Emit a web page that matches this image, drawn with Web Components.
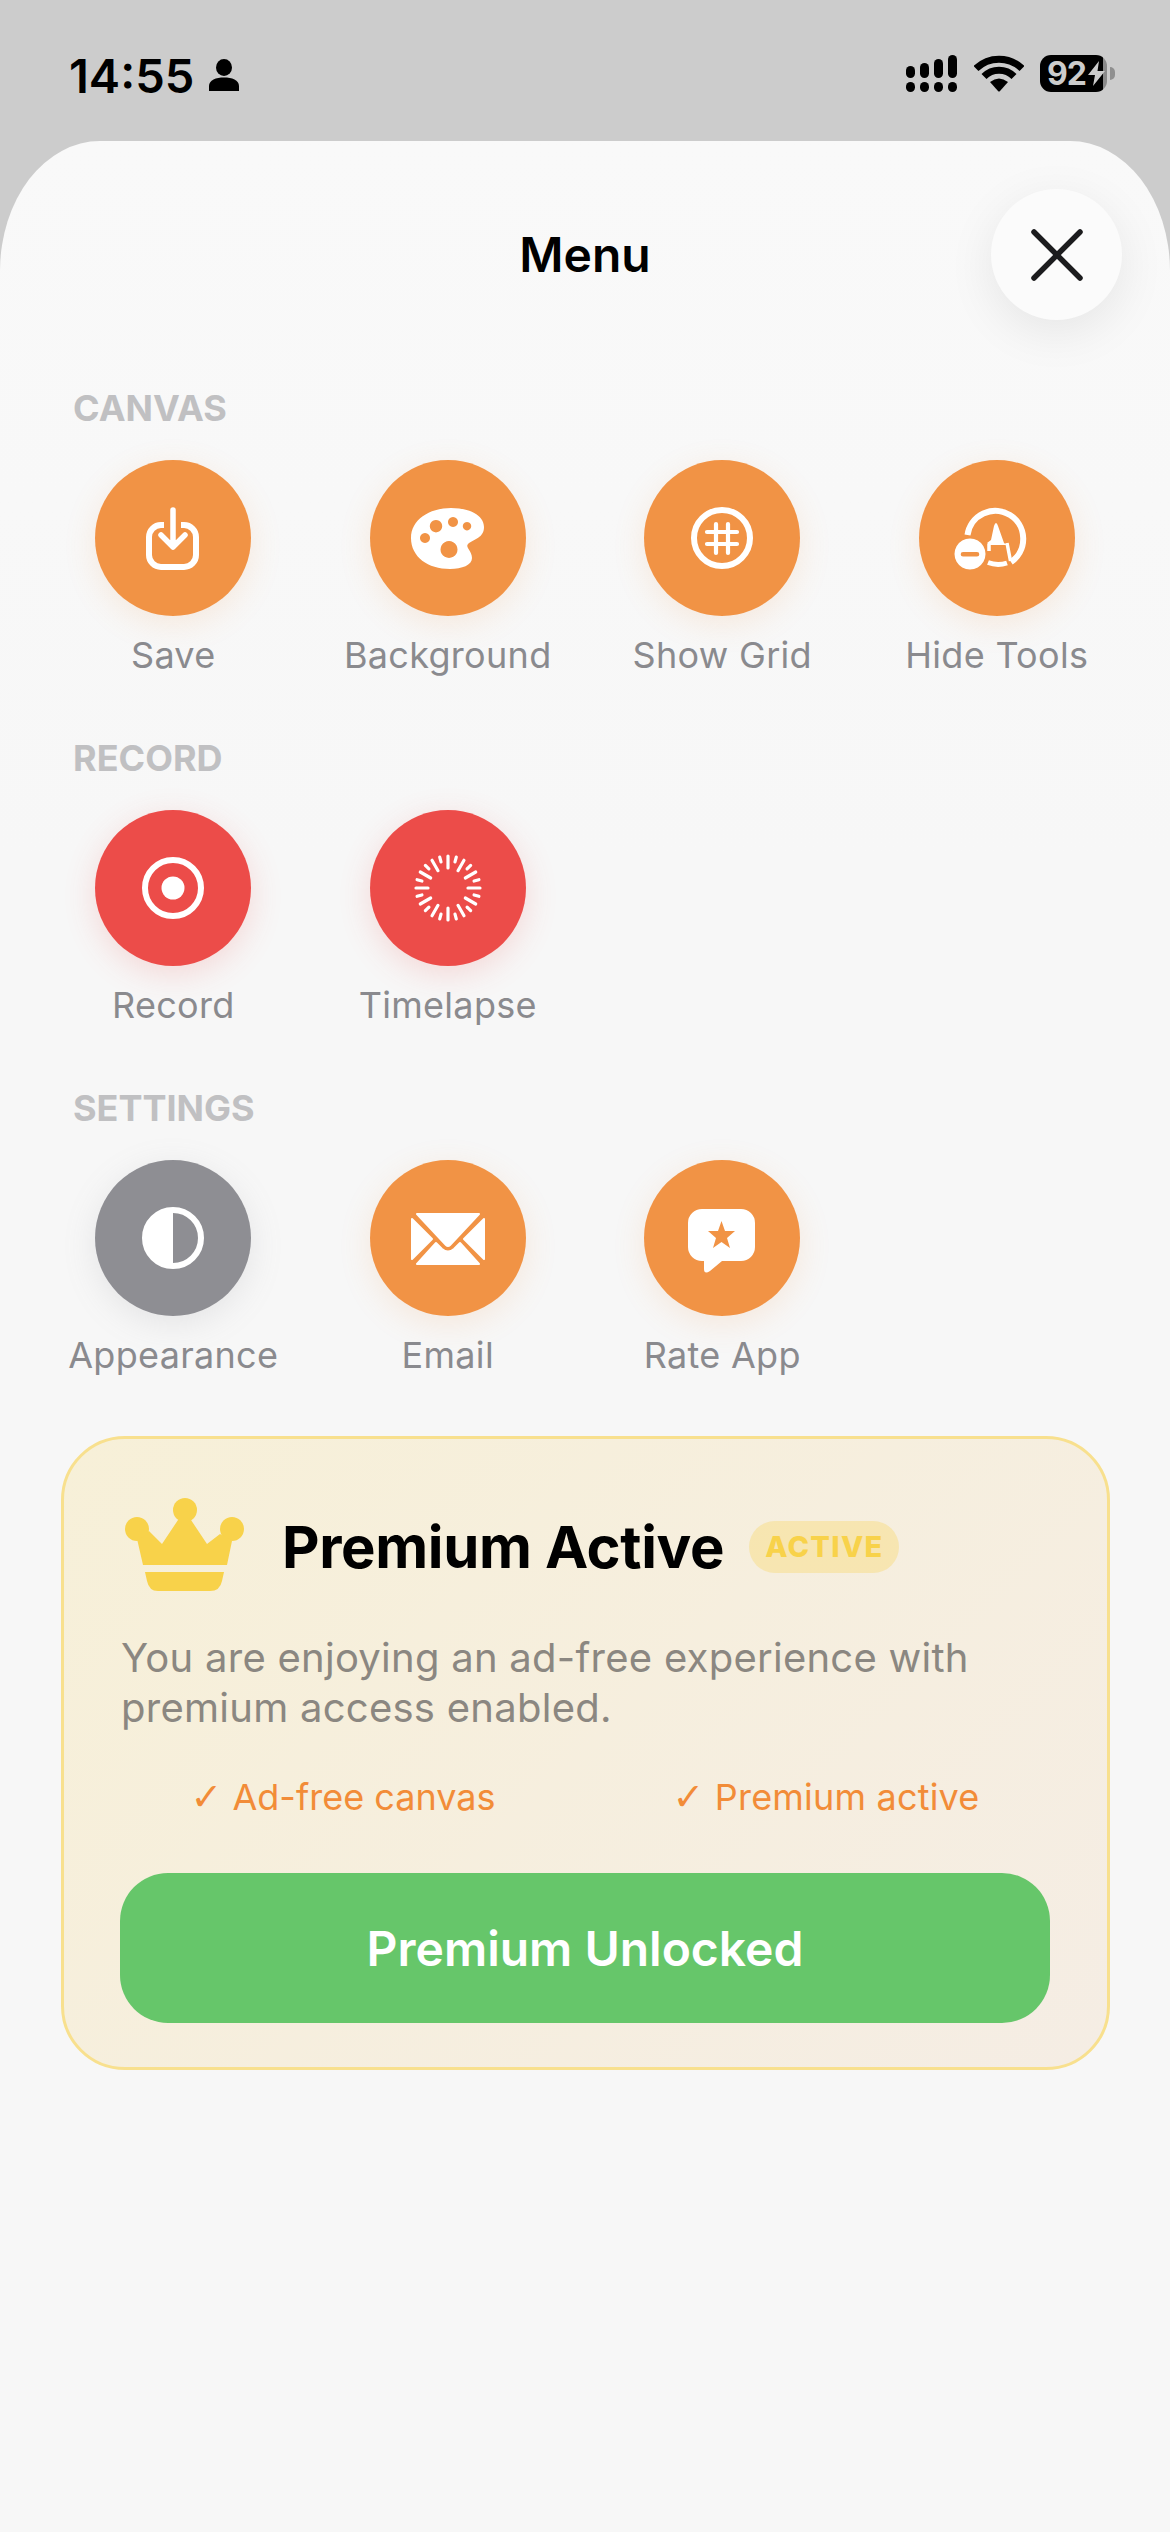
<!DOCTYPE html>
<html>
<head>
<meta charset="utf-8">
<title>Menu</title>
<style>
    html, body {
        margin: 0;
        padding: 0;
        background: #cccccc;
        font-family: Inter, "Liberation Sans", sans-serif;
    }
</style>
</head>
<body>
<status-bar></status-bar>
<menu-sheet>
    <menu-section label="CANVAS">
        <menu-action label="Save" icon="save"></menu-action>
        <menu-action label="Background" icon="palette"></menu-action>
        <menu-action label="Show Grid" icon="grid"></menu-action>
        <menu-action label="Hide Tools" icon="tools"></menu-action>
    </menu-section>
    <menu-section label="RECORD">
        <menu-action label="Record" icon="record" color="#ec4c49" glow="rgba(238,77,74,.18)"></menu-action>
        <menu-action label="Timelapse" icon="timelapse" color="#ec4c49" glow="rgba(238,77,74,.18)"></menu-action>
    </menu-section>
    <menu-section label="SETTINGS">
        <menu-action label="Appearance" icon="appearance" color="#8e8e93" glow="rgba(142,142,147,.17)"></menu-action>
        <menu-action label="Email" icon="email"></menu-action>
        <menu-action label="Rate App" icon="rate"></menu-action>
    </menu-section>
    <premium-card></premium-card>
</menu-sheet>

<script>
// every icon is drawn in the 156x156 box of the circle
function buildTicks() {
    let out = '';
    for (let i = 0; i < 24; i++) {
        const inner = i % 2 === 0 ? 20 : 27;
        out += `<line x1="78" y1="${78 - inner}" x2="78" y2="46" transform="rotate(${i * 15} 78 78)"/>`;
    }
    return out;
}

const ICONS = {
    save: `<g fill="none" stroke="#fff" stroke-width="6" stroke-linecap="round" stroke-linejoin="round">
            <path d="M69 65H66a12 12 0 0 0-12 12V95a12 12 0 0 0 12 12H89a12 12 0 0 0 12-12V77a12 12 0 0 0-12-12H86" stroke-linecap="butt"/>
            <path d="M78 50V87M66 75 78 87 90 75" stroke-width="5.5"/>
        </g>`,
    palette: `<path fill="#fff" fill-rule="evenodd" d="M81 48C99 48 114 55 114 67C114 78 104 79 98 84C95 87 102 91 102 98C102 105 92 109 80 109C58 109 41 97 41 78C41 60 59 48 81 48Z
            M55 73a5 5 0 1 0 .01 0Z M66 60a6.2 6.2 0 1 0 .01 0Z M83 57a5 5 0 1 0 .01 0Z M97 62a4.2 4.2 0 1 0 .01 0Z M79 81a8.5 8.5 0 1 0 .01 0Z"/>`,
    grid: `<g fill="none" stroke="#fff" stroke-linecap="round">
            <circle cx="78" cy="78" r="28" stroke-width="6"/>
            <path d="M72 64V93M84 64V93M63 72H93M63 84H93" stroke-width="4.2"/>
        </g>`,
    tools: `<g fill="none" stroke="#fff">
            <path d="M48.500 75A28 28 0 1 1 92 102" stroke-width="6"/>
            <path d="M69 102.500A28 28 0 0 0 88 103" stroke-width="5"/>
            <path d="M88 83 91.500 101M70 84 70 91" stroke-width="3.500"/>
        </g>
        <path fill="#fff" d="M77 63Q78 63 79 66L85 83 88 85H70L68 83 72 80 75 66Q76 63 77 63Z"/>
        <path fill="#fff" fill-rule="evenodd" d="M51 78.500a15.500 15.500 0 1 0 .01 0ZM44 92h14a2.300 2.300 0 0 1 0 4.600H44a2.300 2.300 0 0 1 0-4.600Z"/>`,
    record: `<circle cx="78" cy="78" r="28" fill="none" stroke="#fff" stroke-width="6"/>
        <circle cx="78" cy="78" r="11.500" fill="#fff"/>`,
    timelapse: `<g stroke="#fff" stroke-width="3.200" stroke-linecap="round">${buildTicks()}</g>`,
    appearance: `<circle cx="78" cy="78" r="28" fill="none" stroke="#fff" stroke-width="6"/>
        <path fill="#fff" d="M78 50A28 28 0 0 0 78 106Z"/>`,
    email: `<g fill="#fff" stroke="#fff" stroke-width="2" stroke-linejoin="round">
            <path d="M47 54H109L80 85Q78 87 76 85Z"/>
            <path d="M42 59 62 79 42 99Z"/>
            <path d="M114 59 94 79 114 99Z"/>
            <path d="M47 104 66 83 72 89Q78 94 84 89L90 83 109 104Z"/>
        </g>`,
    rate: `<path fill="#fff" d="M58 49H97a14 14 0 0 1 14 14V87a14 14 0 0 1-14 14H78L66 111Q60 115 60 109V101H58A14 14 0 0 1 44 87V63A14 14 0 0 1 58 49Z"/>
        <path fill="#f19345" d="M77.500 61 81 71 91 71 83 78 86 88 77.500 82 69 88 72 78 64 71 74 71Z"/>`
};

class StatusBar extends HTMLElement {
    connectedCallback() {
        this.attachShadow({ mode: 'open' });
        this.shadowRoot.innerHTML = `
            <style>
                :host {
                    display: flex;
                    box-sizing: border-box;
                    height: 141px;
                    padding: 55px 55px 0 69px;
                    align-items: flex-start;
                    justify-content: space-between;
                    color: #000;
                    font-family: Inter, "Liberation Sans", sans-serif;
                }
                .left { display: flex; align-items: flex-start; }
                .right { display: flex; align-items: center; }
                .time { margin-top: 2px; font-size: 47px; font-weight: 600; line-height: 38px; letter-spacing: 0; }
                .person { margin: 4px 0 0 15px; }
                .signal { margin-right: 17px; }
                .wifi { margin-right: 16px; }
                .battery {
                    box-sizing: border-box;
                    width: 67px;
                    height: 37px;
                    padding-left: 7px;
                    border-radius: 11px;
                    display: flex;
                    align-items: center;
                    color: #ccc;
                    background: linear-gradient(to right, #000 63px, #8a8a8a 63px);
                    font-size: 32px;
                    font-weight: 700;
                    line-height: 37px;
                    letter-spacing: -1px;
                }
                .tip { width: 5px; height: 13px; margin-left: 3px; background: #8f8f8f; border-radius: 0 5px 5px 0; }
            </style>
            <div class="left">
                <span class="time">14:55</span>
                <svg class="person" width="30" height="32" viewBox="0 0 30 32">
                    <ellipse cx="15" cy="8.500" rx="8" ry="8.500"/>
                    <path d="M0 32V27C0 21 7 18.500 15 18.500S30 21 30 27V32Z"/>
                </svg>
            </div>
            <div class="right">
                <svg class="signal" width="51" height="37" viewBox="0 0 51 37">
                    <rect x="0" y="11" width="9" height="12" rx="4.500"/>
                    <rect x="14" y="8" width="9" height="15" rx="4.500"/>
                    <rect x="28" y="4" width="9" height="19" rx="4.500"/>
                    <rect x="42" y="0" width="9" height="23" rx="4.500"/>
                    <rect x="0" y="27" width="9" height="10" rx="4.500"/>
                    <rect x="14" y="27" width="9" height="10" rx="4.500"/>
                    <rect x="28" y="27" width="9" height="10" rx="4.500"/>
                    <rect x="42" y="27" width="9" height="10" rx="4.500"/>
                </svg>
                <svg class="wifi" width="50" height="37" viewBox="0 0 50 37">
                    <path d="M2 13.500A33 33 0 0 1 48 13.500M10 21.500A21 21 0 0 1 40 21.500" fill="none" stroke="#000" stroke-width="7"/>
                    <path d="M16 27Q25 20 34 27L26 36Q25 37 24 36Z"/>
                </svg>
                <div class="battery">
                    <span>92</span>
                    <svg width="17" height="25" viewBox="0 0 17 25" style="margin-left:2px">
                        <path fill="#ccc" d="M11 0 0 14H7L5 25 17 10H9.500Z"/>
                    </svg>
                </div>
                <div class="tip"></div>
            </div>
        `;
    }
}

class MenuSheet extends HTMLElement {
    connectedCallback() {
        this.attachShadow({ mode: 'open' });
        this.shadowRoot.innerHTML = `
            <style>
                :host {
                    display: block;
                    position: relative;
                    box-sizing: border-box;
                    height: 2391px;
                    background: linear-gradient(#f9f9f9, #f7f7f7 30%, #f7f7f7 100%);
                    border-radius: 100px 100px 0 0 / 130px 130px 0 0;
                    font-family: Inter, "Liberation Sans", sans-serif;
                }
                .header {
                    padding: 84px 0 101px;
                    text-align: center;
                    font-size: 48px;
                    font-weight: 580;
                    line-height: 60px;
                    color: #000;
                }
                .close {
                    position: absolute;
                    top: 48px;
                    right: 48px;
                    width: 131px;
                    height: 131px;
                    border-radius: 50%;
                    background: #fbfbfb;
                    box-shadow: 0 12px 48px rgba(0,0,0,.08);
                    display: flex;
                    align-items: center;
                    justify-content: center;
                }
            </style>
            <div class="header">Menu</div>
            <div class="close">
                <svg width="52" height="52" viewBox="0 0 52 52">
                    <path d="M3 3 49 49M49 3 3 49" stroke="#1c1c1e" stroke-width="5.500" stroke-linecap="round"/>
                </svg>
            </div>
            <slot></slot>
        `;
    }
}

class MenuSection extends HTMLElement {
    connectedCallback() {
        this.attachShadow({ mode: 'open' });
        const label = this.getAttribute('label') || '';
        this.shadowRoot.innerHTML = `
            <style>
                :host {
                    display: block;
                    padding: 0 36px;
                    margin-bottom: 59px;
                }
                .label {
                    padding-left: 37px;
                    height: 44px;
                    line-height: 44px;
                    font-size: 36px;
                    font-weight: 700;
                    letter-spacing: 0;
                    color: #c0c0c2;
                }
                .grid {
                    margin-top: 30px;
                    display: grid;
                    grid-template-columns: repeat(4, 1fr);
                }
            </style>
            <div class="label">${label}</div>
            <div class="grid"><slot></slot></div>
        `;
    }
}

class MenuAction extends HTMLElement {
    connectedCallback() {
        this.attachShadow({ mode: 'open' });
        const label = this.getAttribute('label') || '';
        const icon = this.getAttribute('icon') || '';
        const color = this.getAttribute('color') || '#f19345';
        const glow = this.getAttribute('glow') || 'rgba(241,147,69,.15)';
        this.shadowRoot.innerHTML = `
            <style>
                :host {
                    display: flex;
                    flex-direction: column;
                    align-items: center;
                }
                .circle {
                    width: 156px;
                    height: 156px;
                    border-radius: 50%;
                    background: ${color};
                    box-shadow: 0 8px 32px ${glow};
                }
                svg { display: block; }
                .label {
                    margin-top: 17px;
                    height: 44px;
                    line-height: 44px;
                    font-size: 36px;
                    font-weight: 400;
                    letter-spacing: 0.3px;
                    color: #8a8a8e;
                    white-space: nowrap;
                }
            </style>
            <div class="circle">
                <svg width="156" height="156" viewBox="0 0 156 156">${ICONS[icon] || ''}</svg>
            </div>
            <div class="label">${label}</div>
        `;
    }
}

class PremiumCard extends HTMLElement {
    connectedCallback() {
        this.attachShadow({ mode: 'open' });
        this.shadowRoot.innerHTML = `
            <style>
                :host {
                    display: block;
                    box-sizing: border-box;
                    width: 1049px;
                    margin: 1px 60px 0 61px;
                    padding: 52px 57px 44px 56px;
                    border: 3px solid #f8e08e;
                    border-radius: 64px;
                    background: linear-gradient(135deg, #f7f0d8, #f5ede4);
                }
                .top { display: flex; align-items: center; height: 112px; }
                .crown { margin: -5px 38px 0 5px; flex: none; }
                h2 {
                    margin: 0;
                    font-size: 58px;
                    font-weight: 700;
                    letter-spacing: -0.35px;
                    line-height: 70px;
                    color: #000;
                }
                .badge {
                    margin-left: 25px;
                    padding: 0 16px;
                    height: 52px;
                    line-height: 52px;
                    border-radius: 26px;
                    background: rgba(248,210,74,.3);
                    color: #f8d24a;
                    font-size: 29px;
                    font-weight: 800;
                    letter-spacing: 1.3px;
                }
                p {
                    margin: 30px 0 0 1px;
                    font-size: 40px;
                    line-height: 50px;
                    letter-spacing: 0.26px;
                    color: #8b8781;
                }
                .checks {
                    margin-top: 42px;
                    height: 44px;
                    display: flex;
                    justify-content: center;
                    gap: 177px;
                    font-size: 36px;
                    line-height: 44px;
                    color: #f28c38;
                }
                .checks span + span { letter-spacing: 0.2px; }
                .tick { font-family: "DejaVu Sans", sans-serif; font-size: 38px; line-height: 0; }
                .btn {
                    margin-top: 54px;
                    height: 150px;
                    border-radius: 48px;
                    background: #66c66a;
                    color: #fff;
                    display: flex;
                    align-items: center;
                    justify-content: center;
                    font-size: 48px;
                    font-weight: 600;
                }
            </style>
            <div class="top">
                <svg class="crown" width="119" height="93" viewBox="0 0 119 93" fill="#f8d24a">
                    <circle cx="60" cy="12" r="12"/>
                    <circle cx="12" cy="31" r="12"/>
                    <circle cx="107" cy="31" r="12"/>
                    <path d="M12.500 43 24 33 37 46 53 22H66L82 46 95 36 107 43 102 67H18Z"/>
                    <path d="M20 74H99L97 83Q95 93 85 93H33Q24 93 22 83Z"/>
                </svg>
                <h2>Premium Active</h2>
                <span class="badge">ACTIVE</span>
            </div>
            <p>You are enjoying an ad-free experience with premium access enabled.</p>
            <div class="checks">
                <span><span class="tick">✓</span> Ad-free canvas</span>
                <span><span class="tick">✓</span> Premium active</span>
            </div>
            <div class="btn">Premium Unlocked</div>
        `;
    }
}

customElements.define('status-bar', StatusBar);
customElements.define('menu-sheet', MenuSheet);
customElements.define('menu-section', MenuSection);
customElements.define('menu-action', MenuAction);
customElements.define('premium-card', PremiumCard);
</script>
</body>
</html>
